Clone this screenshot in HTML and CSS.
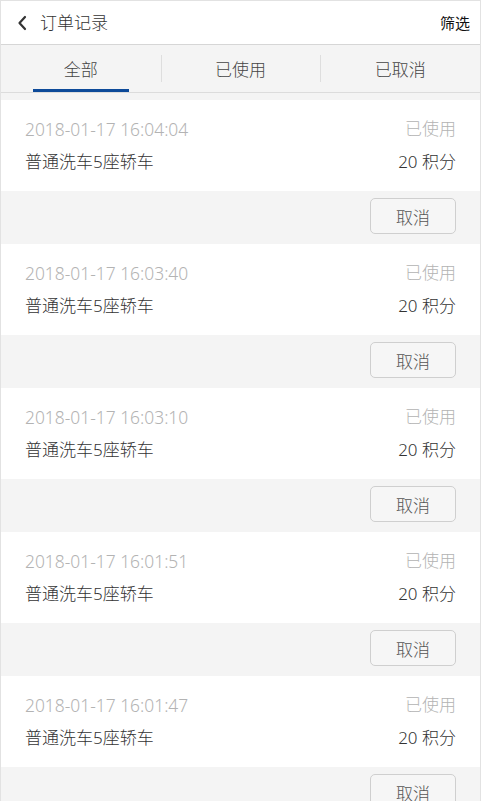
FILE: index.html
```html
<!DOCTYPE html>
<html lang="zh-CN">
<head>
<meta charset="utf-8">
<title>订单记录</title>
<link rel="stylesheet" href="styles.css">
</head>
<body>
<div class="page">
  <header class="header">
    <div class="header-left">
      <svg class="back" width="10" height="16" viewBox="0 0 10 16"><path d="M8 2 L2.5 8 L8 14" fill="none" stroke="#333" stroke-width="2.2" stroke-linecap="round" stroke-linejoin="round"/></svg>
      <span class="title">订单记录</span>
    </div>
    <span class="filter">筛选</span>
  </header>
  <nav class="tabs">
    <div class="tab active"><span>全部</span></div>
    <div class="tab"><span>已使用</span></div>
    <div class="tab"><span>已取消</span></div>
  </nav>
  <main class="list">
    <div class="item">
      <div class="card">
        <div class="row"><span class="date">2018-01-17 16:04:04</span><span class="status">已使用</span></div>
        <div class="row"><span class="name">普通洗车5座轿车</span><span class="points">20 积分</span></div>
      </div>
      <div class="actions"><button class="btn">取消</button></div>
    </div>
    <div class="item">
      <div class="card">
        <div class="row"><span class="date">2018-01-17 16:03:40</span><span class="status">已使用</span></div>
        <div class="row"><span class="name">普通洗车5座轿车</span><span class="points">20 积分</span></div>
      </div>
      <div class="actions"><button class="btn">取消</button></div>
    </div>
    <div class="item">
      <div class="card">
        <div class="row"><span class="date">2018-01-17 16:03:10</span><span class="status">已使用</span></div>
        <div class="row"><span class="name">普通洗车5座轿车</span><span class="points">20 积分</span></div>
      </div>
      <div class="actions"><button class="btn">取消</button></div>
    </div>
    <div class="item">
      <div class="card">
        <div class="row"><span class="date">2018-01-17 16:01:51</span><span class="status">已使用</span></div>
        <div class="row"><span class="name">普通洗车5座轿车</span><span class="points">20 积分</span></div>
      </div>
      <div class="actions"><button class="btn">取消</button></div>
    </div>
    <div class="item">
      <div class="card">
        <div class="row"><span class="date">2018-01-17 16:01:47</span><span class="status">已使用</span></div>
        <div class="row"><span class="name">普通洗车5座轿车</span><span class="points">20 积分</span></div>
      </div>
      <div class="actions"><button class="btn">取消</button></div>
    </div>
  </main>
</div>
</body>
</html>
```

FILE: styles.css
```css
* { box-sizing: border-box; }
html, body {
  margin: 0;
  padding: 0;
  background: #f4f4f4;
}
body {
  font-family: "Noto Sans", "Noto Sans CJK SC", sans-serif;
  font-weight: 300;
  color: #333;
}
.page {
  border: 1px solid #e2e2e2;
  border-bottom: none;
  min-height: 801px;
  background: #f4f4f4;
}
.header {
  height: 44px;
  background: #fff;
  border-bottom: 1px solid #d6d6d6;
  display: flex;
  align-items: center;
  justify-content: space-between;
  padding: 0 10px 0 16px;
}
.header-left {
  display: flex;
  align-items: center;
}
.back {
  display: block;
  margin-right: 13px;
}
.title {
  font-size: 17px;
  color: #333;
  line-height: 24px;
}
.filter {
  font-size: 15px;
  font-weight: 400;
  color: #111;
  line-height: 22px;
}
.tabs {
  height: 48px;
  display: flex;
  background: #f4f4f4;
  border-bottom: 1px solid #dcdcdc;
}
.tab {
  flex: 1;
  display: flex;
  align-items: center;
  justify-content: center;
  position: relative;
  font-size: 17px;
  color: #444;
}
.tab + .tab::before {
  content: "";
  position: absolute;
  left: 0;
  top: 10px;
  height: 27px;
  border-left: 1px solid #dedede;
}
.tab.active::after {
  content: "";
  position: absolute;
  left: 50%;
  bottom: 0;
  width: 96px;
  margin-left: -48px;
  height: 3px;
  background: #0d4a99;
}
.list {
  padding-top: 7px;
}
.card {
  background: #fff;
  height: 91px;
  padding: 17px 24px 0 24px;
  display: flex;
  flex-direction: column;
  gap: 9px;
}
.row {
  display: flex;
  justify-content: space-between;
  align-items: center;
  height: 24px;
  line-height: 24px;
}
.date {
  font-size: 17.4px;
  color: #b3b3b3;
}
.status {
  font-size: 17px;
  color: #b3b3b3;
}
.name, .points {
  font-size: 17px;
  color: #333;
}
.actions {
  height: 53px;
  display: flex;
  justify-content: flex-end;
  padding: 7px 24px 0 0;
}
.btn {
  width: 86px;
  height: 36px;
  border: 1px solid #cfcfcf;
  border-radius: 5px;
  background: #f6f6f6;
  font-family: "Noto Sans", "Noto Sans CJK SC", sans-serif;
  font-weight: 300;
  font-size: 17px;
  color: #555;
  padding: 0;
}
```
